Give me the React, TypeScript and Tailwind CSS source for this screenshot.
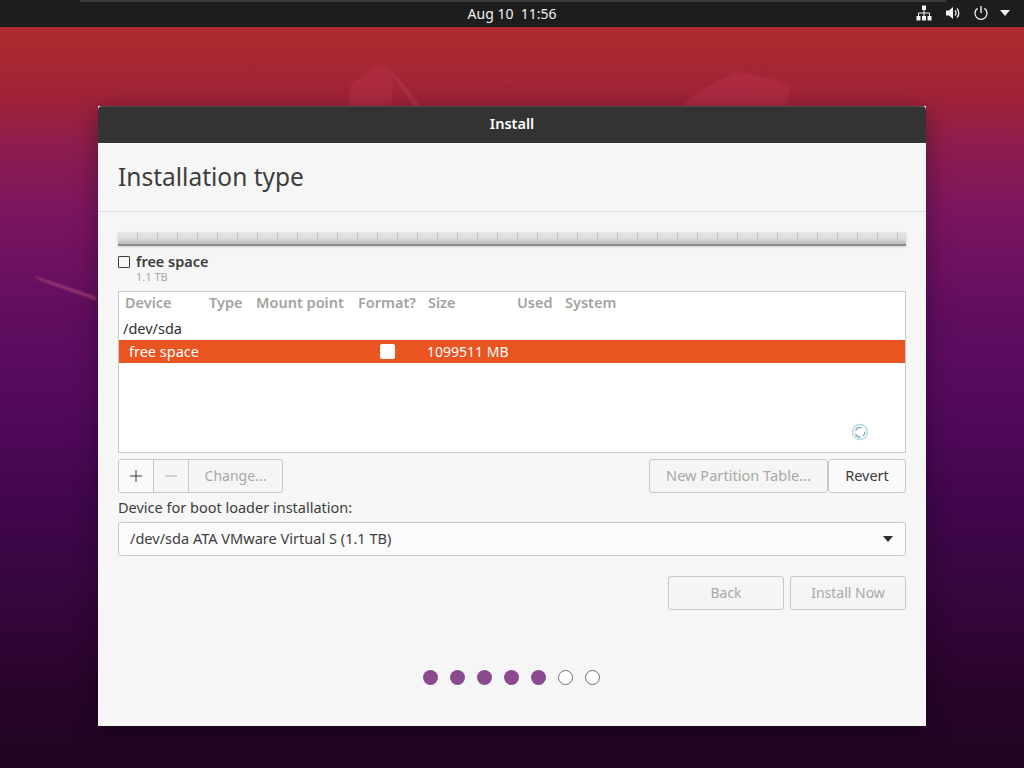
const UI = { fontFamily: '"Noto Sans", "Open Sans", sans-serif' };

function Spacer() {
  return <div className="w-5 h-full shrink-0 border-r border-[#c4c4c2]" />;
}

function Wallpaper() {
  return (
    <svg className="absolute inset-0 blur-[1px]" width="1024" height="768" viewBox="0 0 1024 768">
      <path d="M348 106 L351 84 L380 63 L392 74 L392 106 Z" fill="#b8324a" fillOpacity="0.5" />
      <path d="M386 66 L394 74 L421 106 L414 106 Z" fill="#c64a5c" fillOpacity="0.35" />
      <path d="M682 106 L700 90 L736 72 L770 78 L792 86 L786 106 Z" fill="#b8324a" fillOpacity="0.5" />
      <path d="M34 276 L96 297 L96 300 L40 280 Z" fill="#b8527a" fillOpacity="0.75" />
    </svg>
  );
}

function TopIcons() {
  return (
    <div className="flex items-center text-white">
      <svg width="16" height="16" viewBox="0 0 16 16">
        <path d="M6 0.5h4v4.5H6z M0.5 11h4v4.5h-4z M6 11h4v4.5H6z M11.5 11h4v4.5h-4z" fill="#f2f2f2" />
        <path d="M8 5v6 M2.5 11V8h11v3" stroke="#f2f2f2" strokeWidth="1" fill="none" />
      </svg>
      <svg width="16" height="16" viewBox="0 0 16 16" className="ml-[13px]">
        <path d="M1 5.5h3L8 2v12L4 10.5H1z" fill="#f2f2f2" />
        <path d="M10 5.5a3.5 3.5 0 0 1 0 5 M12 3.5a6.5 6.5 0 0 1 0 9" stroke="#f2f2f2" strokeWidth="1.3" fill="none" />
      </svg>
      <svg width="16" height="16" viewBox="0 0 16 16" className="ml-[12px]">
        <path d="M8 1v7" stroke="#f2f2f2" strokeWidth="1.4" fill="none" />
        <path d="M4.6 3.4a6 6 0 1 0 6.8 0" stroke="#f2f2f2" strokeWidth="1.3" fill="none" />
      </svg>
      <svg width="10" height="6" viewBox="0 0 10 6" className="ml-[11px]">
        <path d="M0 0h10L5 6z" fill="#f2f2f2" />
      </svg>
    </div>
  );
}

const cols = [
  ["Device", "w-[90px] pl-[6px]"],
  ["Type", "w-[47px]"],
  ["Mount point", "w-[102px]"],
  ["Format?", "w-[70px]"],
  ["Size", "w-[89px]"],
  ["Used", "w-[48px]"],
  ["System", "w-[80px]"],
];

function Btn({ children, className, disabled }: { children: React.ReactNode; className: string; disabled?: boolean }) {
  return (
    <div
      className={
        "h-[34px] pb-[1px] flex items-center justify-center border border-[#cdc7c2] rounded-[3px] " +
        (disabled ? "text-[#a9a9a6] bg-[#f5f5f5] " : "text-[#3d3d3d] bg-[#fafafa] ") +
        className
      }
    >
      {children}
    </div>
  );
}

export default function App() {
  return (
    <div
      style={UI}
      className="relative w-[1024px] h-[768px] overflow-hidden flex flex-col bg-[linear-gradient(180deg,#ac2c2d_27px,#a02238_98px,#8e1d4e_145px,#7a1560_216px,#620e60_310px,#530a5c_405px,#42064e_500px,#36063e_594px,#28042a_690px,#1f0420_768px)]"
    >
      <Wallpaper />
      <div className="relative h-[27px] shrink-0 bg-[#1d1d1d] flex items-center">
        <div className="absolute top-0 left-[80px] w-[866px] h-[2px] bg-[#3a3a3a]" />
        <div className="flex-1 text-center text-[14px] text-[#f0f0f0]">Aug 10&nbsp;&nbsp;11:56</div>
        <div className="absolute right-[14px] top-[5px]">
          <TopIcons />
        </div>
      </div>

      <div className="relative mt-[79px] mx-[98px] h-[620px] flex flex-col bg-[#f6f6f6] shadow-[0_6px_24px_rgba(0,0,0,0.35)]">
        <div className="h-[37px] shrink-0 pb-[2px] bg-[#333333] rounded-t-[4px] border-t border-[#4a4a4a] flex items-center justify-center text-white text-[14.5px] font-semibold">
          Install
        </div>
        <div className="h-[69px] shrink-0 pt-[1px] border-b border-[#e2e2e2] flex items-center pl-5 text-[24.5px] text-[#3d3d3d]">
          Installation type
        </div>
        <div className="px-5 flex-1 flex flex-col">
          <div className="mt-5 h-[14px] flex overflow-hidden border-b-2 border-[#8a8a8a] bg-[linear-gradient(180deg,#e6e6e4,#dededc_50%,#bcbcb9)] shadow-[0_1px_2px_rgba(0,0,0,0.15)]">
            {Array.from({ length: 40 }).map((_, i) => (
              <Spacer key={i} />
            ))}
          </div>
          <div className="mt-2 h-[31px] flex">
            <div className="w-3 h-3 mt-[2px] border border-[#3d3d3d] rounded-[1px]" />
            <div className="ml-[6px] flex flex-col -mt-[1px]">
              <div className="text-[14.5px] leading-[16px] font-semibold text-[#3d3d3d]">free space</div>
              <div className="text-[11px] leading-[16px] text-[#a9a9a6]">1.1 TB</div>
            </div>
          </div>
          <div className="mt-[6px] h-[162px] bg-white border border-[#c9c9c6] flex flex-col relative">
            <div className="h-[22px] flex items-center text-[14.5px] font-semibold text-[#a3a3a0]">
              {cols.map(([n, c]) => (
                <div key={n} className={c}>
                  {n}
                </div>
              ))}
            </div>
            <div className="h-[26px] pt-[3px] flex items-center pl-1 text-[14.5px] text-[#2e2e2e]">/dev/sda</div>
            <div className="h-[23px] flex items-center bg-[#e95420] text-white text-[14.5px]">
              <div className="w-[261px] pl-[10px]">free space</div>
              <div className="w-[15px] h-[15px] bg-white rounded-[2px]" />
              <div className="ml-[32px] text-[14px]">1099511 MB</div>
            </div>
            <svg className="absolute left-[732px] top-[131px]" width="18" height="18" viewBox="0 0 18 18">
              <circle cx="9" cy="9" r="7.5" fill="none" stroke="#b5d8e2" strokeWidth="1.4" />
              <path d="M4.5 7.5a5 5 0 0 1 6-3 M14 8.5a5 5 0 0 1-2 4.5 M9.5 14a5 5 0 0 1-5-3" fill="none" stroke="#6ea9bc" strokeWidth="1.3" />
            </svg>
          </div>
          <div className="mt-[6px] flex text-[14.5px]">
            <div className="flex h-[34px] border border-[#cdc7c2] rounded-[3px] bg-[#f5f5f5] w-[165px]">
              <div className="w-[35px] flex items-center justify-center bg-[#fafafa] border-r border-[#cdc7c2] rounded-l-[3px]">
                <svg width="12" height="12" viewBox="0 0 12 12">
                  <path d="M6 0v12M0 6h12" stroke="#3d3d3d" strokeWidth="1" />
                </svg>
              </div>
              <div className="w-[35px] flex items-center justify-center border-r border-[#cdc7c2]">
                <svg width="12" height="12" viewBox="0 0 12 12">
                  <path d="M0 6h12" stroke="#a9a9a6" strokeWidth="1" />
                </svg>
              </div>
              <div className="flex-1 pb-[2px] flex items-center justify-center text-[14px] text-[#a9a9a6]">Change...</div>
            </div>
            <div className="flex-1" />
            <Btn disabled className="w-[179px] text-[14.6px]">New Partition Table...</Btn>
            <Btn className="w-[78px] text-[14.5px]">Revert</Btn>
          </div>
          <div className="mt-[6px] h-[17px] leading-[16px] text-[14.5px] text-[#3d3d3d]">Device for boot loader installation:</div>
          <div className="mt-[6px] h-[34px] flex items-center justify-between border border-[#cdc7c2] rounded-[3px] bg-[#fbfbfb] pl-[11px] pr-[12px] text-[14.55px] text-[#3d3d3d]">
            <span className="-mt-[1px]">/dev/sda ATA VMware Virtual S (1.1 TB)</span>
            <svg width="10" height="6" viewBox="0 0 10 6">
              <path d="M0 0h10L5 6z" fill="#2e2e2e" />
            </svg>
          </div>
          <div className="mt-5 flex justify-end gap-[6px] text-[14px]">
            <Btn disabled className="w-[116px]">Back</Btn>
            <Btn disabled className="w-[116px]">Install Now</Btn>
          </div>
          <div className="mt-[60px] pr-[2px] flex justify-center gap-[12px]">
            {[0, 1, 2, 3, 4].map((i) => (
              <div key={i} className="w-[15px] h-[15px] rounded-full bg-[#8b4a8f]" />
            ))}
            {[5, 6].map((i) => (
              <div key={i} className="w-[15px] h-[15px] rounded-full border border-[#6f6f6f] bg-white" />
            ))}
          </div>
        </div>
      </div>
    </div>
  );
}
